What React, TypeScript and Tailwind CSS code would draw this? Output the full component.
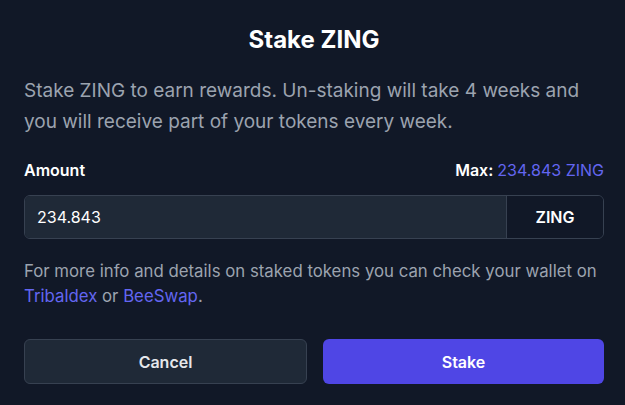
export default function App() {
  return (
    <div
      className="w-[625px] h-[405px] bg-[#111827] pl-6 pr-[21px] pt-[26px] text-white"
      style={{ fontFamily: 'Inter, "Noto Sans", sans-serif' }}
    >
      <h2 className="text-center text-2xl font-bold leading-7">Stake ZING</h2>

      <p className="mt-[21px] text-[19px] leading-[31px] text-[#9ca3af]">
        Stake ZING to earn rewards. Un-staking will take 4 weeks and you will
        receive part of your tokens every week.
      </p>

      <div className="mt-[21px] flex items-center justify-between text-base leading-6">
        <span className="font-semibold">Amount</span>
        <span className="font-semibold">
          Max: <span className="font-normal text-[#6366f1]">234.843 ZING</span>
        </span>
      </div>

      <div className="mt-[13px] flex h-[44px] overflow-hidden rounded-md border border-[#374151]">
        <input
          className="flex-1 bg-[#1f2937] px-3 text-base text-white outline-none"
          defaultValue="234.843"
        />
        <div className="flex w-[97px] items-center justify-center border-l border-[#374151] bg-[#111827] text-base font-semibold">
          ZING
        </div>
      </div>

      <p className="mt-[20px] text-[16.8px] leading-[25px] text-[#9ca3af]">
        For more info and details on staked tokens you can check your wallet on{' '}
        <a className="text-[#6366f1]">Tribaldex</a> or{' '}
        <a className="text-[#6366f1]">BeeSwap</a>.
      </p>

      <div className="mt-[30px] flex gap-4">
        <button className="h-[45px] flex-1 rounded-md border border-[#374151] bg-[#1f2937] text-base font-semibold text-[#e5e7eb]">
          Cancel
        </button>
        <button className="h-[45px] flex-1 rounded-md bg-[#4f46e5] text-base font-semibold text-white">
          Stake
        </button>
      </div>
    </div>
  );
}
